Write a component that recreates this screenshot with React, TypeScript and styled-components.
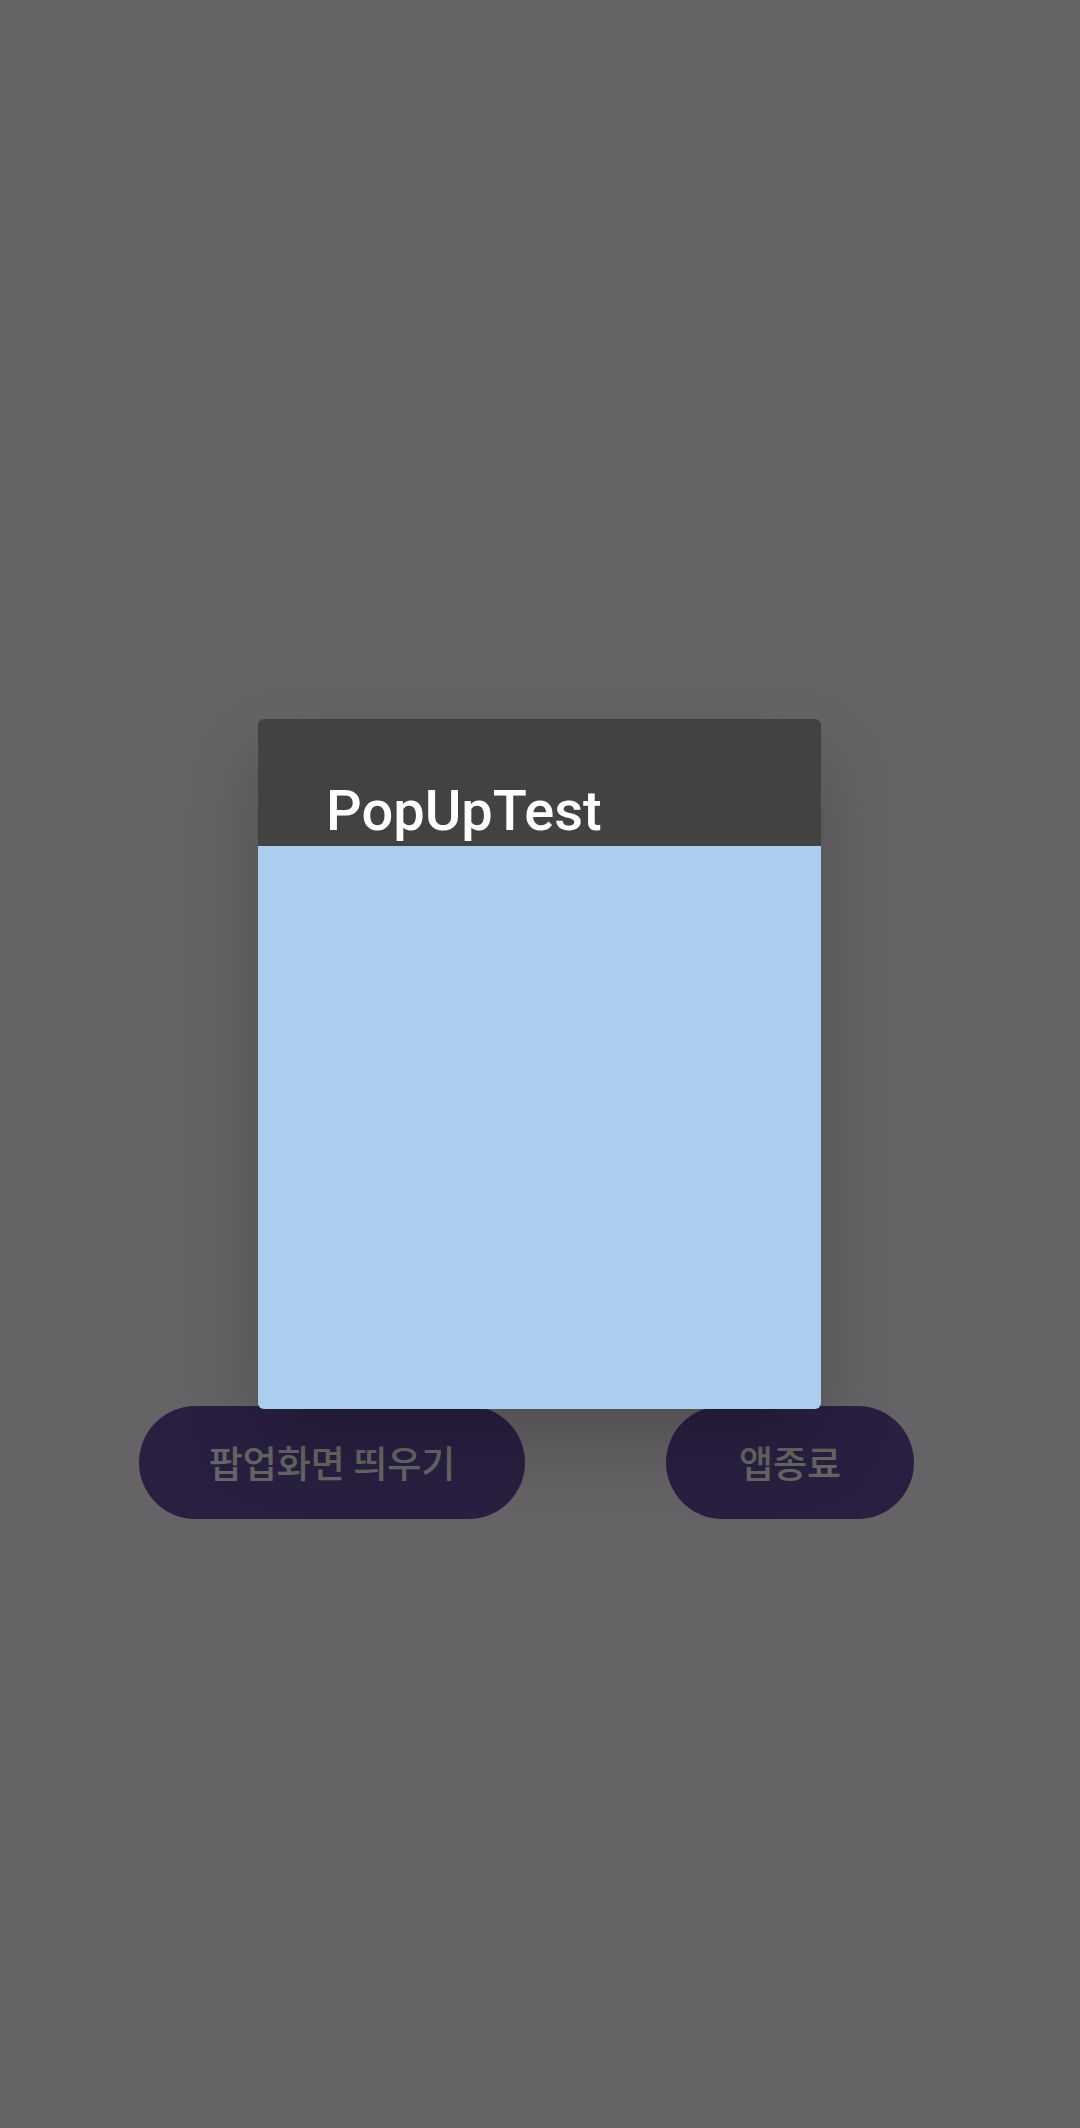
import React from "react";
import styled, { createGlobalStyle } from "styled-components";

const GlobalStyle = createGlobalStyle`
  *, *::before, *::after { box-sizing: border-box; }
  body {
    margin: 0;
    background: #fcf7fc;
    font-family: Roboto, "Noto Sans CJK KR", sans-serif;
  }
`;

const Page = styled.div`
  position: relative;
`;

const Screen = styled.main`
  min-height: 100vh;
  display: grid;
  grid-template-rows: 1406fr auto 609fr;
`;

const Actions = styled.div`
  grid-row: 2;
  display: flex;
  justify-content: center;
  gap: 141px;
  padding-right: 27px;
`;

const ActionButton = styled.button<{ $minWidth: number }>`
  min-width: ${(p) => p.$minWidth}px;
  height: 113px;
  padding: 0 64px 2px;
  border: 0;
  border-radius: 57px;
  background: #6650a4;
  color: #fff;
  font: 500 37px/56px "Noto Sans CJK KR", Roboto, sans-serif;
  white-space: nowrap;
`;

const Scrim = styled.div`
  position: absolute;
  inset: 0;
  display: flex;
  align-items: center;
  justify-content: center;
  padding-right: 1px;
  background: rgba(0, 0, 0, 0.6);
`;

const Dialog = styled.section`
  width: 563px;
  max-width: 100%;
  overflow: hidden;
  border-radius: 6px;
  background: #424242;
  box-shadow: 0 36px 76px rgba(0, 0, 0, 0.2);
`;

const DialogTitle = styled.h1`
  margin: 0;
  padding: 59px 68px 2px;
  color: #fff;
  font: 500 56px/66px Roboto, sans-serif;
`;

const DialogBody = styled.div`
  aspect-ratio: 1;
  background: #abcdef;
`;

export default function App() {
  return (
    <Page>
      <GlobalStyle />
      <Screen>
        <Actions>
          <ActionButton type="button" $minWidth={386}>팝업화면 띄우기</ActionButton>
          <ActionButton type="button" $minWidth={248}>앱종료</ActionButton>
        </Actions>
      </Screen>
      <Scrim>
        <Dialog role="dialog" aria-modal="true" aria-labelledby="popup-title">
          <DialogTitle id="popup-title">PopUpTest</DialogTitle>
          <DialogBody />
        </Dialog>
      </Scrim>
    </Page>
  );
}
